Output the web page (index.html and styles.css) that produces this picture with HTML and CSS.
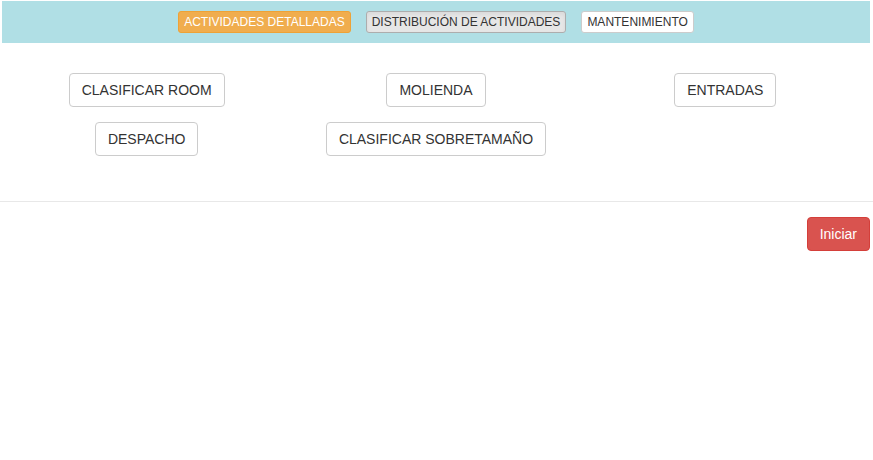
FILE: index.html
```html
<!DOCTYPE html>
<html lang="es">
<head>
<meta charset="utf-8">
<title>Actividades</title>
<link rel="stylesheet" href="styles.css">
</head>
<body>
<div class="topbar">
  <button class="btn btn-xs btn-warning">ACTIVIDADES DETALLADAS</button>
  <button class="btn btn-xs btn-default active">DISTRIBUCIÓN DE ACTIVIDADES</button>
  <button class="btn btn-xs btn-default">MANTENIMIENTO</button>
</div>
<div class="grid">
  <div class="cell"><button class="btn btn-default">CLASIFICAR ROOM</button></div>
  <div class="cell"><button class="btn btn-default">MOLIENDA</button></div>
  <div class="cell"><button class="btn btn-default">ENTRADAS</button></div>
  <div class="cell"><button class="btn btn-default">DESPACHO</button></div>
  <div class="cell"><button class="btn btn-default">CLASIFICAR SOBRETAMAÑO</button></div>
</div>
<hr class="divider">
<div class="actions">
  <button class="btn btn-danger">Iniciar</button>
</div>
</body>
</html>
```
FILE: styles.css
```css
* { box-sizing: border-box; }
html, body {
  margin: 0;
  padding: 0;
  background: #fff;
}
body {
  font-family: "Liberation Sans", Arial, Helvetica, sans-serif;
  font-size: 14px;
  color: #333;
}
.btn {
  display: inline-block;
  font-family: inherit;
  font-size: 14px;
  line-height: 20px;
  padding: 6px 12px;
  border: 1px solid transparent;
  border-radius: 4px;
  cursor: pointer;
  white-space: nowrap;
  margin: 0;
}
.btn-xs {
  font-size: 12px;
  line-height: 18px;
  padding: 1px 5px;
  border-radius: 3px;
}
.btn-default {
  color: #333;
  background: #fff;
  border-color: #ccc;
}
.btn-default.active {
  background: #e6e6e6;
  border-color: #adadad;
  box-shadow: inset 0 2px 4px rgba(0, 0, 0, 0.06);
}
.btn-warning {
  color: #fff;
  background: #f0ad4e;
  border-color: #eea236;
}
.btn-danger {
  color: #fff;
  background: #d9534f;
  border-color: #d43f3a;
}
.topbar {
  margin: 1px 3px 0 2px;
  padding: 10px 0;
  background: #b0dfe5;
  display: flex;
  justify-content: center;
  gap: 15px;
}
.grid {
  margin: 30px 3px 0 2px;
  display: grid;
  grid-template-columns: repeat(3, 1fr);
  row-gap: 15px;
}
.cell {
  display: flex;
  justify-content: center;
}
.divider {
  margin: 45px 0 0;
  border: 0;
  border-top: 1px solid #e8e8e8;
  height: 0;
}
.actions {
  margin: 15px 3px 0 2px;
  display: flex;
  justify-content: flex-end;
}
```
